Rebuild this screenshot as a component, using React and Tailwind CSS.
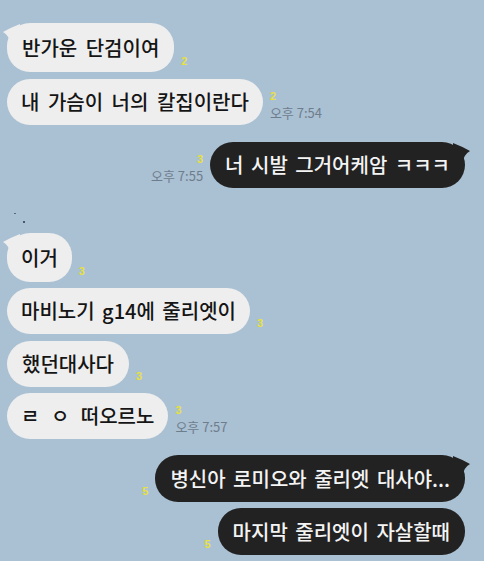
import React from "react";

const FONT = "font-['Noto_Sans_CJK_KR','Noto_Sans',sans-serif]";

function LeftTail() {
  return (
    <svg className="absolute left-[-4px] top-0" width="20" height="24" viewBox="0 0 20 24">
      <path d="M17 1 Q9 4 0 9 Q6 12 8 22 L17 22 Z" fill="#eeeeee" />
    </svg>
  );
}

function RightTail() {
  return (
    <svg className="absolute right-[-5px] top-0" width="20" height="24" viewBox="0 0 20 24">
      <path d="M3 1 Q11 4 20 9 Q14 12 12 22 L3 22 Z" fill="#222222" />
    </svg>
  );
}

function Meta({ n, time, right }) {
  return (
    <div className={`flex flex-col gap-[3px] pb-[5px] ${right ? "items-end" : "items-start"}`}>
      <span className="text-[11px] leading-[12px] font-bold text-[#e8e040] font-['Liberation_Sans',sans-serif]">
        {n}
      </span>
      {time && (
        <span className={`text-[13px] leading-[15px] text-[#6e7d8c] whitespace-nowrap ${FONT}`}>
          {time}
        </span>
      )}
    </div>
  );
}

function Left({ text, n, time, tail, h = "h-[46px]", mt, ws = "[word-spacing:3px]", px = "px-[14px]" }) {
  return (
    <div className={`flex items-end gap-[7px] pl-[7px] ${mt}`}>
      <div className={`relative flex items-center ${h} rounded-[23px] bg-[#eeeeee] ${px}`}>
        {tail && <LeftTail />}
        <span className={`relative text-[20px] leading-[26px] font-medium text-[#151515] whitespace-nowrap ${ws} ${FONT}`}>
          {text}
        </span>
      </div>
      <Meta n={n} time={time} />
    </div>
  );
}

function Right({ text, n, time, tail, h = "h-[46px]", mt }) {
  return (
    <div className={`flex items-end justify-end gap-[7px] pr-[19px] ${mt}`}>
      <Meta n={n} time={time} right />
      <div className={`relative flex items-center ${h} rounded-[23px] bg-[#222222] px-[15px]`}>
        {tail && <RightTail />}
        <span className={`relative text-[20px] leading-[26px] font-medium text-[#f4f4f4] whitespace-nowrap [word-spacing:3px] ${FONT}`}>
          {text}
        </span>
      </div>
    </div>
  );
}

export default function App() {
  return (
    <div className="w-[484px] h-[561px] overflow-hidden bg-[#aac0d3] flex flex-col pt-[23px]">
      <Left text="반가운 단검이여" n="2" tail h="h-[49px]" px="px-[15px]" ws="[word-spacing:4px]" />
      <Left text="내 가슴이 너의 칼집이란다" n="2" time="오후 7:54" mt="mt-[7px]" ws="[word-spacing:4px]" />
      <Right text="너 시발 그거어케암 ㅋㅋㅋ" n="3" time="오후 7:55" tail mt="mt-[17px]" />
      <div className="mt-[25px] h-[11px] flex flex-col">
        <span className="ml-[14px] w-[2px] h-[1px] bg-[#5a6a78]" />
        <span className="ml-[23px] mt-[7px] w-[2px] h-[2px] bg-[#4a5a68]" />
      </div>
      <Left text="이거" n="3" tail h="h-[49px]" mt="mt-[9px]" />
      <Left text="마비노기 g14에 줄리엣이" n="3" mt="mt-[6px]" />
      <Left text="했던대사다" n="3" mt="mt-[7px]" px="px-[15px]" />
      <Left text="ㄹ ㅇ 떠오르노" n="3" time="오후 7:57" mt="mt-[6px]" ws="[word-spacing:7px]" />
      <Right text="병신아 로미오와 줄리엣 대사야..." n="5" tail h="h-[47px]" mt="mt-[16px]" />
      <Right text="마지막 줄리엣이 자살할때" n="5" h="h-[47px]" mt="mt-[6px]" />
    </div>
  );
}
